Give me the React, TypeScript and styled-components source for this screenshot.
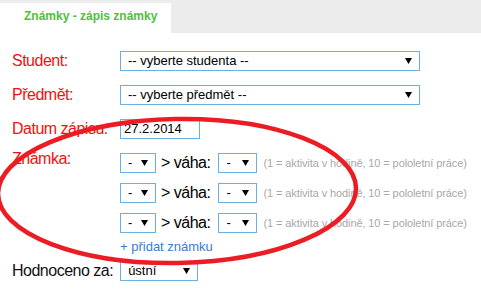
import React from 'react';
import styled, {createGlobalStyle} from 'styled-components';

const GlobalStyle = createGlobalStyle`
    html, body {
        margin:0;
        padding:0;
        background:#ffffff;
    }
    body {
        font-family:"Liberation Sans", Arial, sans-serif;
        color:#000000;
    }
`;

const grades = [0, 1, 2];

const Arrow: React.FunctionComponent = () => (
    <svg width="7" height="6" viewBox="0 0 7 6">
        <polygon points="0,0 7,0 3.5,6" fill="#000000"/>
    </svg>
);

const FakeSelect: React.FunctionComponent<{value:string, width:number}> = ({value, width}) => (
    <SelectBox $width={width}>
        <span>{value}</span>
        <Arrow/>
    </SelectBox>
);

const App: React.FunctionComponent = () => {
    return (
        <Wrapper>
            <GlobalStyle/>
            <TabBar>
                <Tab>Známky - zápis známky</Tab>
            </TabBar>
            <Form>
                <Row>
                    <Label>Student:</Label>
                    <FakeSelect value="-- vyberte studenta --" width={300}/>
                </Row>
                <Row>
                    <Label>Předmět:</Label>
                    <FakeSelect value="-- vyberte předmět --" width={300}/>
                </Row>
                <Row>
                    <Label>Datum zápisu:</Label>
                    <DateInput>27.2.2014</DateInput>
                </Row>
                <Row $top>
                    <Label $raised>Známka:</Label>
                    <GradeList>
                        {grades.map((g) => (
                            <GradeRow key={g}>
                                <FakeSelect value="-" width={36}/>
                                <Weight>&gt; váha:</Weight>
                                <FakeSelect value="-" width={39}/>
                                <Hint>(1 = aktivita v hodině, 10 = pololetní práce)</Hint>
                            </GradeRow>
                        ))}
                        <AddLink>+ přidat známku</AddLink>
                    </GradeList>
                </Row>
                <Row $tight>
                    <Label $dark $auto>Hodnoceno za:</Label>
                    <FakeSelect value="ústní" width={78}/>
                </Row>
            </Form>
            <Scribble width="481" height="289" viewBox="0 0 481 289">
                <ellipse cx="177" cy="191" rx="179" ry="72" transform="rotate(-1 177 191)" fill="none" stroke="#ec1c24" strokeWidth="4.5"/>
            </Scribble>
        </Wrapper>
    );
}

const Wrapper = styled.div`
    position:relative;
    width:481px;
    height:289px;
    overflow:hidden;
    background:#ffffff;
`;

const TabBar = styled.div`
    height:33px;
    padding-top:3px;
    box-sizing:border-box;
    background:#ececec;
    display:flex;
`;

const Tab = styled.div`
    width:171px;
    box-sizing:border-box;
    padding:6px 0 0 24px;
    background:#ffffff;
    color:#4fc03c;
    font-size:12px;
    font-weight:bold;
    line-height:14px;
`;

const Form = styled.div`
    display:flex;
    flex-direction:column;
    padding:18px 0 0 12px;
`;

const Row = styled.div<{$top?:boolean, $tight?:boolean}>`
    display:flex;
    align-items:${p => p.$top ? 'flex-start' : 'center'};
    margin-bottom:${p => p.$tight ? '0' : '14px'};
    margin-top:${p => p.$tight ? '-7px' : '0'};
`;

const Label = styled.div<{$dark?:boolean, $auto?:boolean, $raised?:boolean}>`
    width:${p => p.$auto ? 'auto' : '108px'};
    margin-right:${p => p.$auto ? '7px' : '0'};
    margin-top:${p => p.$raised ? '-4px' : '0'};
    color:${p => p.$dark ? '#111111' : '#f31010'};
    font-size:16px;
    letter-spacing:-0.5px;
    line-height:20px;
    white-space:nowrap;
`;

const SelectBox = styled.div<{$width:number}>`
    width:${p => p.$width}px;
    height:20px;
    box-sizing:border-box;
    border:1px solid #6cb0e2;
    background:#ffffff;
    display:flex;
    align-items:center;
    justify-content:space-between;
    padding:0 7px 0 7px;
    font-size:13px;
    line-height:18px;
    flex-shrink:0;
    svg {
        display:block;
    }
`;

const DateInput = styled.div`
    width:80px;
    height:20px;
    box-sizing:border-box;
    border:1px solid #6cb0e2;
    padding-left:3px;
    font-size:13px;
    line-height:18px;
`;

const GradeList = styled.div`
    display:flex;
    flex-direction:column;
    gap:10px;
`;

const GradeRow = styled.div`
    display:flex;
    align-items:center;
`;

const Weight = styled.span`
    margin:0 8px 0 5px;
    font-size:16px;
    letter-spacing:-0.5px;
    white-space:nowrap;
`;

const Hint = styled.span`
    margin-left:6px;
    color:#a8a8a8;
    font-size:11px;
    letter-spacing:-0.1px;
    white-space:nowrap;
`;

const AddLink = styled.a`
    margin-top:-4px;
    color:#3b7bd0;
    font-size:13px;
    line-height:15px;
    text-decoration:none;
    cursor:pointer;
`;

const Scribble = styled.svg`
    position:absolute;
    left:0;
    top:0;
    pointer-events:none;
`;

export default App;
